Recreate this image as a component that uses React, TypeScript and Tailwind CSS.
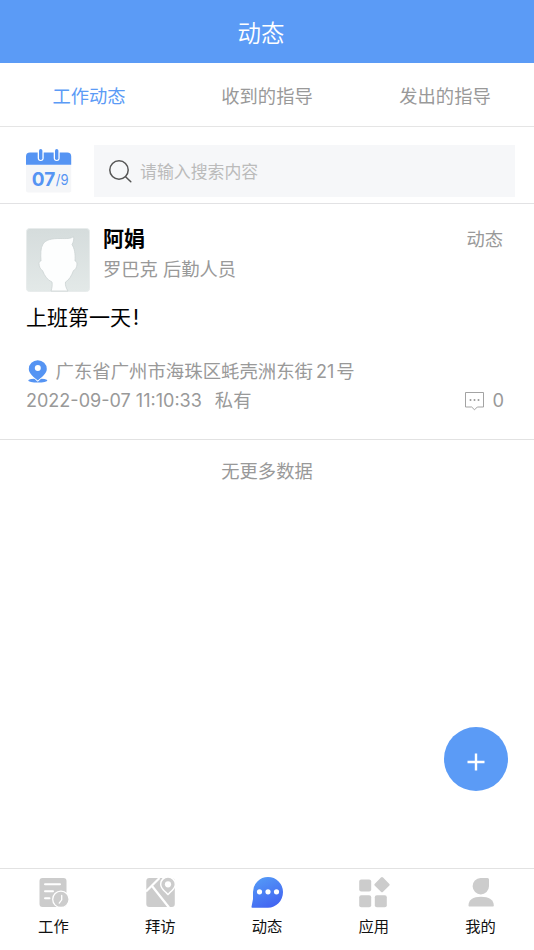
import React from "react";

function CalendarIcon() {
  return (
    <svg width="46" height="45" viewBox="0 0 46 45" className="block">
      <rect x="0" y="4" width="45.200" height="39.500" rx="2" fill="#f5f6f8" />
      <path d="M0 15.800V7.500a4 4 0 0 1 4-4h37.200a4 4 0 0 1 4 4v8.300z" fill="#5594f3" />
      {[14.7, 30.7].map((x) => (
        <g key={x}>
          <rect x={x - 3} y="-1" width="6" height="13" rx="3" fill="#fff" />
          <rect x={x - 1.7} y="0" width="3.400" height="11" rx="1.700" fill="#5594f3" />
        </g>
      ))}
      <text x="5.800" y="36.800" fontSize="19.300" fontWeight="700" fill="#5594f3" textLength="23.500" lengthAdjust="spacingAndGlyphs">07</text>
      <text x="29.800" y="36.300" fontSize="14" fill="#5594f3" textLength="12.800" lengthAdjust="spacingAndGlyphs">/9</text>
    </svg>
  );
}

function Avatar() {
  return (
    <svg width="64" height="64" viewBox="0 0 64 64" className="block shrink-0">
      <defs>
        <linearGradient id="avatarBg" x1="0" y1="0" x2="0" y2="1">
          <stop offset="0" stopColor="#d5dcdc" />
          <stop offset="1" stopColor="#e3e9e8" />
        </linearGradient>
      </defs>
      <rect x="0.500" y="0.500" width="63" height="63" rx="3" fill="url(#avatarBg)" stroke="#e8ecec" />
      <path
        d="M25 63c1-3 1.500-6 1-9-4.500-2-7.500-6-9.500-11.500-2-.5-3.500-4.500-3.500-7 0-1.500.8-2.500 2-2.500-.5-7-.5-13 2-17 3-4.500 9-5.500 17-5.500 6 0 11 .5 13.500-2 .7 3-.2 6-1.500 8 2.500 4 3.500 9 3 16.500 1.500 0 2 1.500 2 3 0 3-1.500 6-3.500 6.500-2 5.500-4.500 9.500-8 11.500-.5 3 .5 6 2.500 9z"
        fill="#fdfefe"
        stroke="#ccd3d3"
        strokeWidth="0.800"
      />
    </svg>
  );
}

function PinIcon() {
  return (
    <svg width="20" height="23" viewBox="0 0 20 23" className="block shrink-0">
      <ellipse cx="9.800" cy="20.500" rx="9.600" ry="2" fill="#5594f3" />
      <path d="M9.800 21.800C6 18.500.8 13.800.8 9a9 8.800 0 0 1 18 0c0 4.800-5.200 9.500-9 12.800z" fill="#fff" />
      <path d="M9.800 20.500C6 17.500.8 13.500.8 9a9 8.800 0 0 1 18 0c0 4.500-5.200 8.500-9 11.500z" fill="#5594f3" />
      <circle cx="9.800" cy="8" r="3" fill="#fff" />
    </svg>
  );
}

function CommentIcon() {
  return (
    <svg width="19" height="19" viewBox="0 0 19 19" fill="none" className="block">
      <path d="M.5.5h18v14.500h-6.200l-2.800 2.800L6.700 15H.5z" stroke="#999" strokeWidth="0.900" />
      <circle cx="5.500" cy="8" r="1" fill="#999" />
      <circle cx="9.500" cy="8" r="1" fill="#999" />
      <circle cx="13.500" cy="8" r="1" fill="#999" />
    </svg>
  );
}

function WorkIcon() {
  return (
    <svg width="32" height="32" viewBox="0 0 32 32" className="block">
      <rect x="2.500" y="1" width="27" height="29" rx="3" fill="#ccc" />
      <path d="M8 7.200h15M8 14.200h8M8 21.200h4.500" stroke="#fff" strokeWidth="2" strokeLinecap="round" />
      <circle cx="23.900" cy="22.300" r="8.200" fill="#ccc" stroke="#fff" strokeWidth="1.300" />
      <path d="M24.700 18.500v4.300l-2.500 3.300" stroke="#fff" strokeWidth="1.300" fill="none" strokeLinecap="round" />
    </svg>
  );
}

function VisitIcon() {
  return (
    <svg width="32" height="32" viewBox="0 0 32 32" className="block">
      <rect x="2.300" y="1" width="28.500" height="29" rx="3" fill="#ccc" />
      <path d="M2 14.500 15.500 1M8 9l17 21.500" stroke="#fff" strokeWidth="2.200" />
      <path d="M24 18.500c-3.500-3.500-8-7-8-11.500a8 8 0 0 1 16 0c0 4.500-4.500 8-8 11.500z" fill="#fff" />
      <path d="M24 16.500c-3-3-6.600-5.500-6.600-9.200a6.600 6.600 0 0 1 13.200 0c0 3.700-3.600 6.200-6.600 9.200z" fill="#ccc" />
      <circle cx="24" cy="7.300" r="3.100" fill="#fff" />
    </svg>
  );
}

function MomentsIcon() {
  return (
    <svg width="32" height="32" viewBox="0 0 32 32" className="block">
      <defs>
        <linearGradient id="bubble" x1="0.200" y1="0" x2="0.700" y2="1">
          <stop offset="0" stopColor="#549bf7" />
          <stop offset="1" stopColor="#4263f1" />
        </linearGradient>
      </defs>
      <path d="M17 0a15 15 0 0 1 15 15c0 9-7 15.700-15 15.700H1.300C.6 30.700.3 30.300.5 29.700L2 22V15A15 15 0 0 1 17 0z" fill="url(#bubble)" />
      <circle cx="8.500" cy="14.800" r="2.600" fill="#fff" />
      <circle cx="17" cy="14.800" r="2.600" fill="#fff" />
      <circle cx="25.500" cy="14.800" r="2.600" fill="#fff" />
    </svg>
  );
}

function AppsIcon() {
  return (
    <svg width="32" height="32" viewBox="0 0 32 32" className="block" fill="#ccc">
      <rect x="1.200" y="2.500" width="12" height="12" rx="2" />
      <rect x="1.200" y="18.200" width="12" height="12" rx="2" />
      <rect x="16.800" y="18.200" width="12" height="12" rx="2" />
      <rect x="18.200" y="1.900" width="11.600" height="11.600" rx="1.500" transform="rotate(45 24 7.700)" />
    </svg>
  );
}

function MineIcon() {
  return (
    <svg width="32" height="32" viewBox="0 0 32 32" className="block" fill="#ccc">
      <path d="M15.500 1h7A1.500 1.500 0 0 1 24 2.500V9.300A8.200 8.200 0 1 1 15.500 1z" />
      <path d="M3.500 28.500C3.500 23 8 19.700 16 19.700S28.800 23 28.800 28.500c0 .6-.4 1-1 1H4.500c-.6 0-1-.4-1-1z" />
    </svg>
  );
}

const navItems = [
  { label: "工作", Icon: WorkIcon },
  { label: "拜访", Icon: VisitIcon },
  { label: "动态", Icon: MomentsIcon },
  { label: "应用", Icon: AppsIcon },
  { label: "我的", Icon: MineIcon },
];

export default function App() {
  return (
    <div className="relative flex h-[950px] w-[534px] flex-col overflow-hidden bg-white font-['Inter','Noto_Sans_CJK_SC',sans-serif] text-[18.3px] text-[#999]">
      <header className="flex h-[63px] shrink-0 items-center justify-center bg-[#5b9bf6] pt-1 pr-3 text-[23.5px] font-[350] text-white">
        <h1>动态</h1>
      </header>

      <nav className="grid h-16 shrink-0 grid-cols-3 items-center border-b border-[#e5e5e5] pt-1 text-center">
        <span className="text-[#5b9bf6]">工作动态</span>
        <span>收到的指导</span>
        <span>发出的指导</span>
      </nav>

      <div className="flex h-[77px] shrink-0 items-start border-b border-[#e2e2e4] pt-[18px] pr-[19px] pl-[26px]">
        <div className="mt-1 w-[68px] shrink-0">
          <CalendarIcon />
        </div>
        <div className="flex h-[52px] flex-1 items-center bg-[#f6f7f9] pl-[15px]">
          <svg width="24" height="24" viewBox="0 0 24 24" fill="none" stroke="#555" strokeWidth="1.500" className="mt-0.5">
            <circle cx="10" cy="10" r="9.200" />
            <path d="m16.600 16.800 5.200 5" strokeLinecap="round" />
          </svg>
          <span className="mt-[3px] ml-[7px] text-[16.9px] text-[#bbb]">请输入搜索内容</span>
        </div>
      </div>

      <article className="h-[236px] shrink-0 border-b border-[#e2e2e2] pr-[30px] pl-[26px]">
        <div className="flex pt-6">
          <Avatar />
          <div className="ml-[13px] flex-1">
            <div className="flex h-[22px] items-center justify-between">
              <span className="text-[21px] font-bold text-black">阿娟</span>
              <span className="mt-0.5 mr-px">动态</span>
            </div>
            <div className="mt-[7px] h-6 leading-6">罗巴克 后勤人员</div>
          </div>
        </div>
        <p className="mt-2.5 h-8 text-[21px] leading-8 text-black">
          上班第一天<span className="ml-0.5">!</span>
        </p>
        <div className="mt-[25px] flex h-[26px] items-center">
          <span className="mb-px ml-[1.5px]">
            <PinIcon />
          </span>
          <span className="ml-2 flex text-[18.4px]">
            广东省广州市海珠区蚝壳洲东街<span className="mr-0.5 ml-[3px] text-[18px]">21</span>号
          </span>
        </div>
        <div className="mt-[3px] flex h-[26px] items-center">
          <span className="text-[18.05px]">2022-09-07 11:10:33</span>
          <span className="ml-[13px]">私有</span>
          <span className="mr-2 ml-auto">
            <CommentIcon />
          </span>
          <span>0</span>
        </div>
      </article>

      <div className="pt-[18px] text-center">无更多数据</div>

      <button className="absolute top-[727px] left-[444px] flex size-16 items-center justify-center rounded-full bg-[#5b9bf6]">
        <svg width="18" height="18" viewBox="0 0 18 18" className="mt-1.5">
          <path d="M9 .5v17M.5 9h17" stroke="#fff" strokeWidth="2.400" />
        </svg>
      </button>

      <footer className="mt-auto grid h-[82px] shrink-0 grid-cols-5 border-t border-[#e2e2e2] text-[15.3px] text-[#111]">
        {navItems.map(({ label, Icon }) => (
          <div key={label} className="flex flex-col items-center pt-2">
            <Icon />
            <span className="mt-1.5 leading-6">{label}</span>
          </div>
        ))}
      </footer>
    </div>
  );
}
